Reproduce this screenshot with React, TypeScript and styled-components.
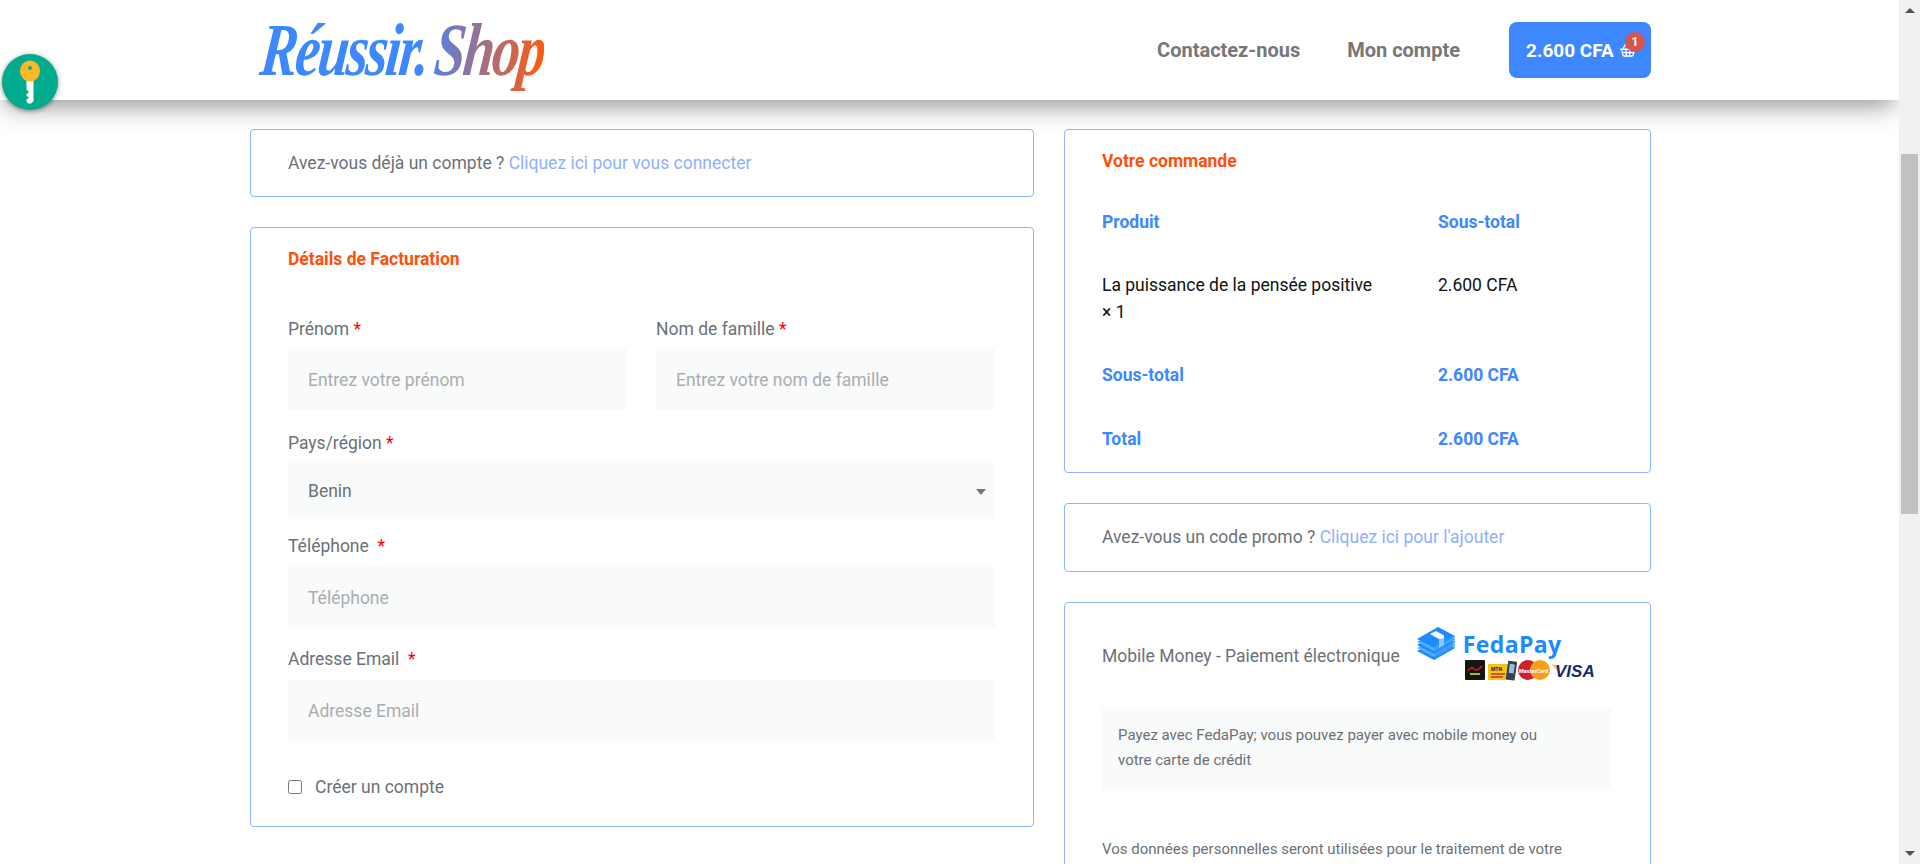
import { ShoppingBasket } from "lucide-react";
import styled, { createGlobalStyle } from "styled-components";

const GlobalStyle = createGlobalStyle`
  html, body {
    margin: 0;
    height: 100%;
    overflow: hidden;
    background: #fff;
    font-family: Roboto, "Liberation Sans", sans-serif;
  }
  * {
    box-sizing: border-box;
  }
`;

const Screen = styled.div`
  display: flex;
  height: 864px;
  overflow: hidden;
`;

const Page = styled.div`
  flex: 1;
  min-width: 0;
  overflow: hidden;
  position: relative;
`;

const Header = styled.header`
  height: 100px;
  padding: 0 248px 0 250px;
  display: flex;
  align-items: center;
  justify-content: space-between;
  background: #fff;
  position: relative;
  z-index: 2;
  box-shadow: 0 10px 25px -5px rgba(0, 0, 0, 0.45);
`;

const Logo = styled.div`
  display: inline-block;
  font-family: "Liberation Serif", serif;
  font-style: italic;
  font-weight: 700;
  font-size: 75px;
  line-height: 90px;
  letter-spacing: -3px;
  word-spacing: -6px;
  white-space: nowrap;
  margin-left: 11px;
  transform-origin: left center;
  transform: scaleX(0.745) skewX(-8deg);
  background: linear-gradient(90deg, #3d87ff 0%, #3d87ff 56%, #ff5a10 100%);
  -webkit-background-clip: text;
  background-clip: text;
  color: transparent;
`;

const Nav = styled.nav`
  display: flex;
  align-items: center;
`;

const NavLink = styled.a`
  font-size: 20px;
  font-weight: 700;
  color: #777;
  margin-right: 47px;
`;

const CartButton = styled.a`
  width: 142px;
  height: 56px;
  margin-left: 2px;
  padding-left: 17px;
  display: flex;
  align-items: center;
  background: #3d87ff;
  border-radius: 8px;
  color: #fff;
  font-size: 19px;
  font-weight: 700;
  position: relative;
`;

const CartIcon = styled(ShoppingBasket)`
  margin-left: 5px;
`;

const CartBadge = styled.span`
  position: absolute;
  top: 10px;
  left: 116px;
  width: 20px;
  height: 20px;
  border-radius: 50%;
  background: #d9534f;
  color: #fff;
  font-size: 12px;
  line-height: 20px;
  text-align: center;
`;

const KeyButton = styled.div`
  position: absolute;
  top: 54px;
  left: 2px;
  width: 56px;
  height: 56px;
  border-radius: 50%;
  background: #00ab8e;
  box-shadow: 0 1px 5px rgba(0, 0, 0, 0.45);
  z-index: 3;
  display: flex;
  align-items: center;
  justify-content: center;
`;

const Columns = styled.main`
  padding: 29px 0 0 250px;
  display: grid;
  grid-template-columns: 784px 587px;
  column-gap: 30px;
  align-items: start;
`;

const Column = styled.div`
  display: flex;
  flex-direction: column;
`;

const Card = styled.section<{ $mt?: number; $pt?: number; $pb?: number }>`
  margin-top: ${({ $mt }) => $mt ?? 0}px;
  padding: ${({ $pt }) => $pt ?? 0}px 37px ${({ $pb }) => $pb ?? 0}px;
  border: 1px solid #8fb8fb;
  border-radius: 4px;
  background: #fff;
`;

const Notice = styled.p`
  margin: 0;
  font-size: 17.5px;
  line-height: 24px;
  color: #6b7177;
`;

const NoticeLink = styled.a`
  color: #8fb0ff;
`;

const Heading = styled.h3`
  margin: 0;
  font-size: 17.5px;
  line-height: 24px;
  font-weight: 700;
  color: #ff4f0a;
`;

const Fields = styled.div`
  display: grid;
  grid-template-columns: 339px 339px;
  column-gap: 29px;
`;

const Field = styled.div<{ $mt: number; $full?: boolean }>`
  margin-top: ${({ $mt }) => $mt}px;
  grid-column: ${({ $full }) => ($full ? "1 / -1" : "auto")};
  position: relative;
`;

const Label = styled.label<{ $lh?: number }>`
  display: block;
  margin-bottom: ${({ $lh }) => 33 - ($lh ?? 26)}px;
  font-size: 17.5px;
  line-height: ${({ $lh }) => $lh ?? 26}px;
  color: #6b7177;
`;

const Required = styled.span`
  color: #f00;
`;

const TextInput = styled.input`
  display: block;
  width: 100%;
  height: 61px;
  padding: 0 20px;
  border: none;
  outline: none;
  background: #f9fafa;
  font-family: inherit;
  font-size: 17.5px;
  color: #6b7177;

  &::placeholder {
    color: #aaadb0;
    opacity: 1;
  }
`;

const CountrySelect = styled.select`
  display: block;
  width: 100%;
  height: 56px;
  padding: 0 20px;
  border: none;
  outline: none;
  appearance: none;
  background: #f9fafa;
  font-family: inherit;
  font-size: 17.5px;
  color: #6b7177;
`;

const SelectCaret = styled.span`
  position: absolute;
  right: 9px;
  bottom: 24px;
  border-left: 5px solid transparent;
  border-right: 5px solid transparent;
  border-top: 6px solid #777;
`;

const CheckRow = styled.label`
  margin-top: 34px;
  display: flex;
  align-items: center;
  font-size: 17.5px;
  line-height: 24px;
  color: #6b7177;
`;

const CheckBox = styled.input`
  width: 14px;
  height: 14px;
  margin: 0 13px 0 0;
`;

const OrderGrid = styled.div`
  margin-top: 37px;
  display: grid;
  grid-template-columns: 336px 1fr;
`;

const OrderHead = styled.div<{ $mt?: number }>`
  margin-top: ${({ $mt }) => $mt ?? 0}px;
  font-size: 17.5px;
  line-height: 24px;
  font-weight: 700;
  color: #3d87ff;
`;

const OrderCell = styled.div`
  margin-top: 38px;
  font-size: 17.5px;
  line-height: 27px;
  color: #111;
`;

const PayRow = styled.div`
  display: flex;
  align-items: flex-start;
`;

const PayLabel = styled.span`
  margin-top: 17px;
  font-size: 17.5px;
  line-height: 24px;
  color: #6b7177;
`;

const FedaLogo = styled.div`
  margin-left: 17px;
  width: 178px;
`;

const FedaTop = styled.div`
  display: flex;
  align-items: center;
`;

const FedaName = styled.span`
  margin-left: 8px;
  font-family: "Open Sans", sans-serif;
  font-size: 23px;
  line-height: 32px;
  font-weight: 700;
  letter-spacing: 0.4px;
  color: #1a8cff;
`;

const Brands = styled.svg`
  display: block;
  margin: -1px 0 0 48px;
`;

const PayBox = styled.div`
  margin: 27px 2px 0 0;
  padding: 15px 60px 16px 16px;
  height: 81px;
  background: #f9fafa;
  font-size: 15px;
  line-height: 25px;
  color: #6b7177;
`;

const Privacy = styled.p`
  margin: 48px 0 0;
  padding-bottom: 40px;
  font-size: 15px;
  line-height: 25px;
  color: #6b7177;
`;

const Scrollbar = styled.div`
  width: 21px;
  height: 864px;
  flex: none;
  background: #f1f1f1;
  display: flex;
  flex-direction: column;
  align-items: center;
`;

const ScrollArrow = styled.span<{ $down?: boolean }>`
  margin: ${({ $down }) => ($down ? "auto 0 8px" : "8px 0 0")};
  border-left: 5px solid transparent;
  border-right: 5px solid transparent;
  border-bottom: ${({ $down }) => ($down ? "none" : "5px solid #505050")};
  border-top: ${({ $down }) => ($down ? "5px solid #505050" : "none")};
`;

const ScrollThumb = styled.div`
  width: 17px;
  height: 360px;
  margin-top: 141px;
  background: #c1c1c1;
`;

const KeyIcon = () => (
  <svg width="22" height="44" viewBox="0 0 22 44" aria-hidden="true">
    <path d="M7.5 18h7v23l-2.5 2.5h-3l-1.5-2v-2l2-1v-1.500l-2-1v-2l2-1v-2l-2-1z" fill="#fff" />
    <ellipse cx="11" cy="11" rx="10" ry="10.500" fill="#fdb827" />
    <circle cx="11" cy="8" r="2" fill="#00ab8e" />
  </svg>
);

const layers = [12, 9, 6, 3, 0];

const FedaCube = () => (
  <svg width="38" height="34" viewBox="0 0 38 34" aria-hidden="true">
    {layers.map((offset, index) => (
      <path
        key={offset}
        d={`M0 ${12 + offset}L21 ${offset}L38 ${9 + offset}L17 ${21 + offset}z`}
        fill={index % 2 === 0 ? "#1a8cff" : "#5aaeff"}
      />
    ))}
    <path d="M13 7L19 4L27 8.500L27 18L22 21L22 12z" fill="#fff" />
    <path d="M22 12L38 9V21L17 33V21z" fill="#2f96ff" opacity="0.55" />
  </svg>
);

const BrandStrip = () => (
  <Brands width="132" height="21" viewBox="0 0 132 21" aria-hidden="true">
    <rect x="0" y="0" width="20" height="20" rx="1" fill="#151515" />
    <path d="M3 11q3-5 6-2t8-3" stroke="#c81e1e" strokeWidth="1.500" fill="none" />
    <path d="M5 14h10" stroke="#9bbd1e" strokeWidth="2" />
    <rect x="23" y="4" width="22" height="16" rx="1" fill="#f6c21c" />
    <text x="26" y="11" fontSize="5" fontWeight="700" fill="#222">MTN</text>
    <path d="M26 14h14M26 17h12" stroke="#c0392b" strokeWidth="1.500" />
    <rect x="42" y="1" width="9" height="19" rx="1" fill="#39424a" transform="rotate(8 46 10)" />
    <rect x="44" y="4" width="5" height="9" fill="#8fc0e8" transform="rotate(8 46 10)" />
    <circle cx="63" cy="10" r="10" fill="#cc1f2f" />
    <circle cx="75" cy="10" r="10" fill="#f79e1b" />
    <text x="54" y="12.500" fontSize="5.500" fontWeight="700" fill="#fff">MasterCard</text>
    <path d="M87 4l6 2 2 8z" fill="#f2b640" />
    <text x="90" y="17" fontFamily="Liberation Sans, sans-serif" fontSize="17" fontStyle="italic" fontWeight="700" fill="#1a2a6c">
      VISA
    </text>
  </Brands>
);

const App = () => {
  return (
    <>
      <GlobalStyle />
      <Screen>
        <Page>
          <Header>
            <Logo>Réussir. Shop</Logo>
            <Nav>
              <NavLink>Contactez-nous</NavLink>
              <NavLink>Mon compte</NavLink>
              <CartButton>
                2.600 CFA
                <CartIcon size={18} strokeWidth={1.75} />
                <CartBadge>1</CartBadge>
              </CartButton>
            </Nav>
          </Header>
          <KeyButton>
            <KeyIcon />
          </KeyButton>

          <Columns>
            <Column>
              <Card $pt={21} $pb={21}>
                <Notice>
                  Avez-vous déjà un compte ? <NoticeLink>Cliquez ici pour vous connecter</NoticeLink>
                </Notice>
              </Card>

              <Card $mt={30} $pt={19} $pb={27}>
                <Heading>Détails de Facturation</Heading>
                <Fields>
                  <Field $mt={45}>
                    <Label>
                      Prénom <Required>*</Required>
                    </Label>
                    <TextInput placeholder="Entrez votre prénom" />
                  </Field>
                  <Field $mt={45}>
                    <Label>
                      Nom de famille <Required>*</Required>
                    </Label>
                    <TextInput placeholder="Entrez votre nom de famille" />
                  </Field>
                  <Field $mt={20} $full>
                    <Label>
                      Pays/région <Required>*</Required>
                    </Label>
                    <CountrySelect defaultValue="Benin">
                      <option>Benin</option>
                    </CountrySelect>
                    <SelectCaret />
                  </Field>
                  <Field $mt={15} $full>
                    <Label $lh={24}>
                      Téléphone &nbsp;<Required>*</Required>
                    </Label>
                    <TextInput placeholder="Téléphone" />
                  </Field>
                  <Field $mt={19} $full>
                    <Label $lh={24}>
                      Adresse Email &nbsp;<Required>*</Required>
                    </Label>
                    <TextInput placeholder="Adresse Email" />
                  </Field>
                </Fields>
                <CheckRow>
                  <CheckBox type="checkbox" />
                  Créer un compte
                </CheckRow>
              </Card>
            </Column>

            <Column>
              <Card $pt={19} $pb={21}>
                <Heading>Votre commande</Heading>
                <OrderGrid>
                  <OrderHead>Produit</OrderHead>
                  <OrderHead>Sous-total</OrderHead>
                  <OrderCell>
                    La puissance de la pensée positive
                    <br />× 1
                  </OrderCell>
                  <OrderCell>2.600 CFA</OrderCell>
                  <OrderHead $mt={37}>Sous-total</OrderHead>
                  <OrderHead $mt={37}>2.600 CFA</OrderHead>
                  <OrderHead $mt={40}>Total</OrderHead>
                  <OrderHead $mt={40}>2.600 CFA</OrderHead>
                </OrderGrid>
              </Card>

              <Card $mt={30} $pt={21} $pb={22}>
                <Notice>
                  Avez-vous un code promo ? <NoticeLink>Cliquez ici pour l'ajouter</NoticeLink>
                </Notice>
              </Card>

              <Card $mt={30} $pt={24}>
                <PayRow>
                  <PayLabel>Mobile Money - Paiement électronique</PayLabel>
                  <FedaLogo>
                    <FedaTop>
                      <FedaCube />
                      <FedaName>FedaPay</FedaName>
                    </FedaTop>
                    <BrandStrip />
                  </FedaLogo>
                </PayRow>
                <PayBox>Payez avec FedaPay; vous pouvez payer avec mobile money ou votre carte de crédit</PayBox>
                <Privacy>Vos données personnelles seront utilisées pour le traitement de votre</Privacy>
              </Card>
            </Column>
          </Columns>
        </Page>
        <Scrollbar>
          <ScrollArrow />
          <ScrollThumb />
          <ScrollArrow $down />
        </Scrollbar>
      </Screen>
    </>
  );
};

export default App;
